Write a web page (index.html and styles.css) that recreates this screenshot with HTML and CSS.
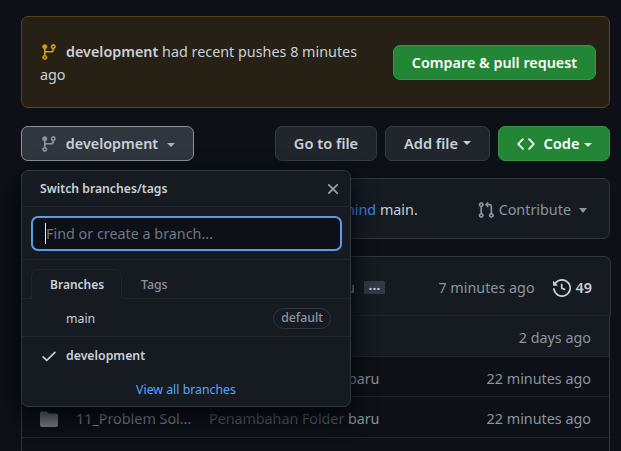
FILE: index.html
```html
<!DOCTYPE html>
<html lang="en">
<head>
<meta charset="utf-8">
<title>Repository</title>
<link rel="stylesheet" href="styles.css">
</head>
<body>
<svg class="defs" width="0" height="0">
  <symbol id="branch" viewBox="0 0 16 16"><path d="M11.75 2.5a.75.75 0 100 1.5.75.75 0 000-1.5zm-2.25.75a2.25 2.25 0 113 2.122V6A2.5 2.5 0 0110 8.5H6a1 1 0 00-1 1v1.128a2.251 2.251 0 11-1.5 0V5.372a2.25 2.25 0 111.5 0v1.836A2.492 2.492 0 016 7h4a1 1 0 001-1v-.628A2.25 2.25 0 019.5 3.25zM4.25 12a.75.75 0 100 1.5.75.75 0 000-1.5zM3.5 3.25a.75.75 0 111.5 0 .75.75 0 01-1.5 0z"/></symbol>
</svg>
<main class="page">
  <section class="flash">
    <p class="flash-text"><svg class="icon" viewBox="0 0 16 16"><use href="#branch"/></svg><b>development</b> had recent pushes 8 minutes ago</p>
    <button class="btn primary compare">Compare &amp; pull request</button>
  </section>

  <div class="toolbar">
    <div class="branch-select">
      <button class="btn branch"><svg class="icon" viewBox="0 0 16 16"><use href="#branch"/></svg>development<i class="caret"></i></button>
      <div class="menu">
        <header class="menu-head">Switch branches/tags
          <svg class="close" viewBox="0 0 16 16"><path d="M3.72 3.72a.75.75 0 011.06 0L8 6.94l3.22-3.22a.75.75 0 111.06 1.06L9.06 8l3.22 3.22a.75.75 0 11-1.06 1.06L8 9.06l-3.22 3.22a.75.75 0 01-1.06-1.06L6.94 8 3.72 4.78a.75.75 0 010-1.06z"/></svg>
        </header>
        <div class="filter"><div class="field"><i class="cursor"></i>Find or create a branch...</div></div>
        <nav class="tabs"><span class="tab active">Branches</span><span class="tab">Tags</span></nav>
        <div class="item"><span>main</span><span class="label">default</span></div>
        <div class="item current"><svg class="check" viewBox="0 0 16 16"><path d="M13.78 4.22a.75.75 0 010 1.06l-7.25 7.25a.75.75 0 01-1.06 0L2.22 9.28a.75.75 0 011.06-1.06L6 10.94l6.72-6.72a.75.75 0 011.06 0z"/></svg><span>development</span></div>
        <a class="view-all">View all branches</a>
      </div>
    </div>
    <button class="btn go">Go to file</button>
    <button class="btn add">Add file<i class="caret"></i></button>
    <button class="btn primary code"><svg class="icon" viewBox="0 0 16 16"><path d="M4.72 3.22a.75.75 0 011.06 1.06L2.06 8l3.72 3.72a.75.75 0 11-1.06 1.06L.47 8.53a.75.75 0 010-1.06l4.25-4.25zm6.56 0a.75.75 0 10-1.06 1.06L13.94 8l-3.72 3.72a.75.75 0 101.06 1.06l4.25-4.25a.75.75 0 000-1.06l-4.25-4.25z"/></svg>Code<i class="caret"></i></button>
  </div>

  <section class="compare-bar">
    <span class="status"><a>behind</a> main.</span>
    <span class="contribute"><svg class="icon" viewBox="0 0 16 16"><path d="M7.177 3.073L9.573.677A.25.25 0 0110 .854v4.792a.25.25 0 01-.427.177L7.177 3.427a.25.25 0 010-.354zM3.75 2.5a.75.75 0 100 1.5.75.75 0 000-1.5zm-2.25.75a2.25 2.25 0 113 2.122v5.256a2.251 2.251 0 11-1.5 0V5.372A2.25 2.25 0 011.5 3.25zM11 2.5h-1V4h1a1 1 0 011 1v5.628a2.251 2.251 0 101.5 0V5A2.5 2.5 0 0011 2.5zm1 10.25a.75.75 0 111.5 0 .75.75 0 01-1.5 0zM3.75 12a.75.75 0 100 1.5.75.75 0 000-1.5z"/></svg>Contribute<i class="caret"></i></span>
  </section>

  <section class="files">
    <header class="commit">
      <span class="commit-msg">baru</span><span class="more">…</span>
      <time>7 minutes ago</time>
      <svg class="icon history" viewBox="0 0 16 16"><path d="M1.643 3.143L.427 1.927A.25.25 0 000 2.104V5.75c0 .138.112.25.25.25h3.646a.25.25 0 00.177-.427L2.715 4.215a6.5 6.5 0 11-1.18 4.458.75.75 0 10-1.493.154 8.001 8.001 0 101.6-5.684zM7.75 4a.75.75 0 01.75.75v2.992l2.028.812a.75.75 0 01-.557 1.392l-2.5-1A.75.75 0 017 8.25v-3.5A.75.75 0 017.75 4z"/></svg>
      <b>49</b>
    </header>
    <div class="row shaded"><time>2 days ago</time></div>
    <div class="row"><span class="name"></span><span class="msg">Penambahan Folder baru</span><time>22 minutes ago</time></div>
    <div class="row dim"><svg class="folder" viewBox="0 0 16 16"><path d="M1.75 1A1.75 1.75 0 000 2.75v10.5C0 14.216.784 15 1.75 15h12.5A1.75 1.75 0 0016 13.25v-8.5A1.75 1.75 0 0014.25 3h-6.5a.25.25 0 01-.2-.1l-.9-1.2c-.33-.44-.85-.7-1.4-.7h-3.500z"/></svg><span class="name">11_Problem Sol...</span><span class="msg"><span class="shade">Penambahan Folder</span> baru</span><time>22 minutes ago</time></div>
    <div class="row"></div>
  </section>
</main>
</body>
</html>
```
FILE: styles.css
```css
* { box-sizing: border-box; }
html, body { height: 100%; }
body {
  margin: 0;
  overflow: hidden;
  background: #0d1017;
  color: #c9d1d9;
  font: 14.35px/23px "Noto Sans", "Open Sans", sans-serif;
}
.defs { position: absolute; }
svg { fill: currentColor; flex: none; }
b { font-weight: 600; }
.page { padding: 16px 11px 0 21px; height: 451px; overflow: hidden; }
.icon { width: 18px; height: 18px; }

.flash {
  display: flex;
  align-items: center;
  height: 92px;
  padding: 0 13px 0 18px;
  border: 1px solid #58421a;
  border-radius: 7px;
  background: #272115;
}
.flash-text { flex: 1; margin: 0; padding-top: 2px; }
.flash-text .icon { color: #d29922; margin-right: 8px; vertical-align: -4px; }

.btn {
  display: flex;
  align-items: center;
  justify-content: center;
  height: 35px;
  padding: 0;
  border: 1px solid #363b42;
  border-radius: 7px;
  background: #21262d;
  color: #c9d1d9;
  font: 600 14.35px/23px "Noto Sans", "Open Sans", sans-serif;
  white-space: nowrap;
}
.primary { background: #238636; border-color: #3a944a; color: #fff; }
.compare { width: 203px; margin-left: 20px; }
.caret {
  width: 0;
  height: 0;
  border: 4px solid transparent;
  border-top-color: currentColor;
  border-bottom: 0;
  margin-left: 5px;
}

.toolbar { display: flex; gap: 8px; margin-top: 18px; }
.branch-select { position: relative; margin-right: auto; }
.branch { width: 173px; background: #30363d; border-color: #8b949e; }
.branch .icon { color: #8b949e; margin-right: 8px; }
.branch .caret { margin: 2px 0 0 9px; color: #aab1b9; }
.go { width: 102px; font-size: 14.6px; }
.add { width: 105px; font-size: 14.6px; }
.add .caret { margin-bottom: 1px; }
.code { width: 112px; font-size: 14.6px; }
.code .icon { margin-right: 9px; }
.code .caret { margin: 2px 0 0 4px; opacity: .85; }

.menu {
  position: absolute;
  z-index: 2;
  top: 44px;
  left: 0;
  width: 330px;
  height: 237px;
  border: 1px solid #30363d;
  border-radius: 7px;
  background: #161b22;
  box-shadow: 0 8px 24px #010409;
  font-size: 12.3px;
  line-height: 18px;
}
.menu-head {
  display: flex;
  align-items: center;
  justify-content: space-between;
  height: 36px;
  padding: 0 8px 0 18px;
  border-bottom: 1px solid #21262d;
  font-size: 12.2px;
  font-weight: 600;
}
.close { width: 18px; height: 18px; color: #9ba3ac; }
.filter { height: 53px; padding: 9px 8px 0 9px; border-bottom: 1px solid #21262d; }
.field {
  display: flex;
  align-items: center;
  height: 35px;
  padding-left: 12px;
  border: 2px solid #5c9be8;
  border-radius: 7px;
  background: #0d1117;
  color: #6e7681;
  font-size: 14.35px;
}
.cursor { width: 1px; height: 21px; background: #e6edf3; }
.tabs { display: flex; height: 39px; padding: 9px 9px 0; border-bottom: 1px solid #21262d; }
.tab { height: 30px; padding: 6px 18px; border: 1px solid transparent; color: #8b949e; font-weight: 500; }
.active {
  width: 91px;
  border-color: #21262d;
  border-bottom-color: #161b22;
  border-radius: 7px 7px 0 0;
  background: #161b22;
  color: #c9d1d9;
  font-size: 12px;
  font-weight: 600;
}
.item {
  display: flex;
  align-items: center;
  justify-content: space-between;
  height: 38px;
  padding: 2px 19px 0 44px;
  border-bottom: 1px solid #21262d;
}
.current { justify-content: flex-start; height: 36px; padding-left: 18px; border: 0; font-weight: 600; }
.check { width: 18px; height: 18px; margin-right: 8px; }
.label {
  height: 21px;
  padding: 0 7px;
  border: 1px solid #30363d;
  border-radius: 11px;
  color: #8b949e;
  font-weight: 500;
}
.view-all { display: block; padding-top: 8px; color: #58a6ff; text-align: center; }

.compare-bar {
  display: flex;
  align-items: center;
  justify-content: space-between;
  height: 61px;
  margin-top: 17px;
  padding: 2px 22px 0 307px;
  border: 1px solid #30363d;
  border-radius: 7px;
  background: #161b22;
}
.compare-bar a { color: #4184e4; }
.contribute { display: flex; align-items: center; color: #8b949e; }
.contribute .icon { margin-right: 4px; }
.contribute .caret { margin: 1px 0 0 8px; border-width: 5px 4.5px 0; }

.files {
  height: 200px;
  margin-top: 17px;
  border: 1px solid #30363d;
  border-bottom: 0;
  border-radius: 7px 7px 0 0;
}
.commit {
  display: flex;
  align-items: center;
  height: 60px;
  margin: -1px -2px 0 -1px;
  padding: 3px 18px 0 0;
  border: 1px solid #30363d;
  border-bottom-color: #21262d;
  border-radius: 7px 7px 0 0;
  background: #161b22;
}
.commit-msg { width: 333px; text-align: right; color: #8b949e; }
.more {
  width: 21px;
  height: 13px;
  margin-left: 9px;
  border-radius: 1px;
  background: #343a43;
  font-weight: 600;
  line-height: 8px;
  text-align: center;
}
time { margin-left: auto; color: #8b949e; }
.history { margin: 0 5px 0 18px; }
.row {
  display: flex;
  align-items: center;
  height: 40.6px;
  padding: 4px 18px 0 18px;
  border-bottom: 1px solid #21262d;
  color: #8b949e;
}
.shaded { background: #161b22; }
.name { width: 133px; white-space: nowrap; }
.msg { letter-spacing: -.05px; }
.folder { width: 18px; height: 18px; margin-right: 18px; color: #767b84; }
.row > .name:first-child { margin-left: 36px; }
.dim .name { color: #7d858e; }
.shade { color: #565d66; }
```
